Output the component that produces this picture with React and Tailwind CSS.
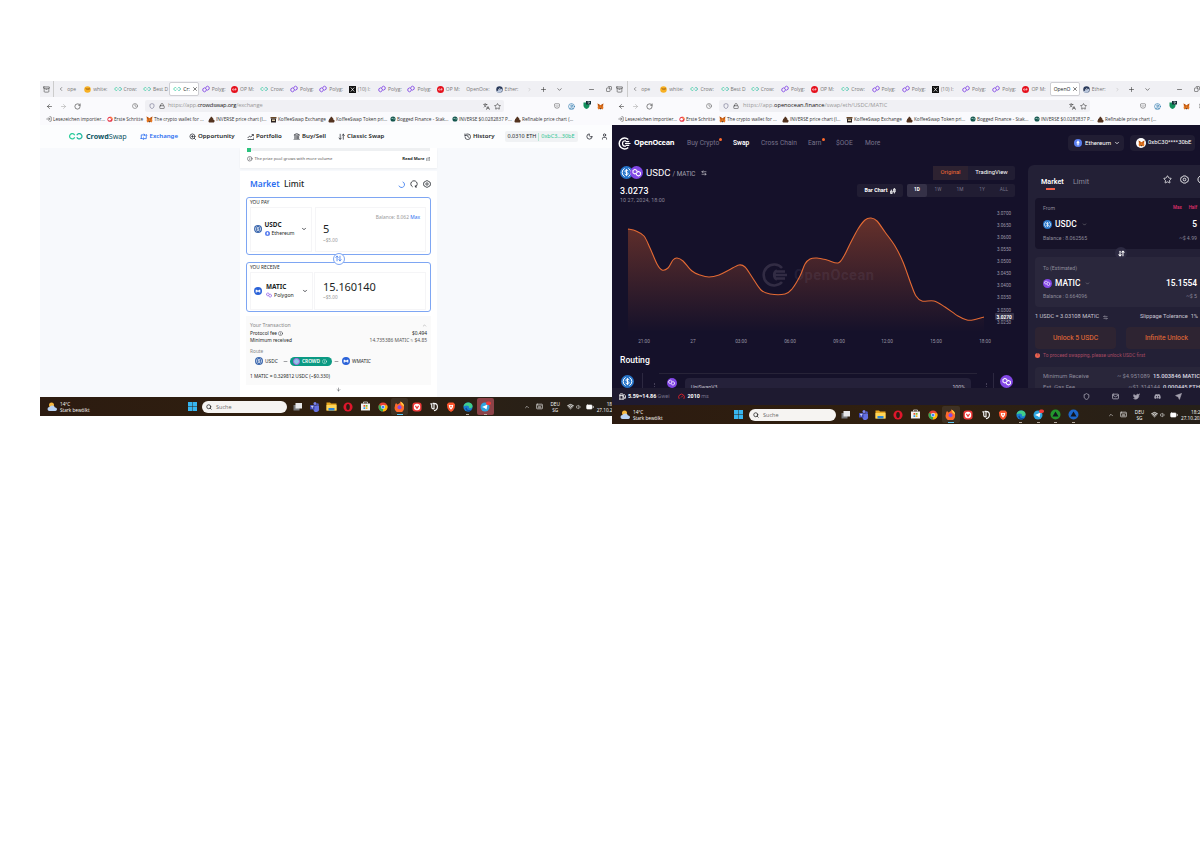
import React from 'react';
import {
  Archive, ArrowDownUp, ArrowLeft, ArrowRight, ArrowUpDown, BatteryMedium, ChevronDown, ChevronLeft, ChevronRight, ChevronUp,
  Clock, Copy, ExternalLink, Fuel, Gauge, History, Info, Keyboard, Landmark, Languages, Lock, LogIn, Mail, Minus, Moon,
  Plus, RotateCw, Search, Shield, Star, User, Volume1, Wifi, X, ArrowLeftRight, ArrowDown,
  ZoomIn, CircleUser, Pocket, Send, Twitter, MoreVertical,
} from 'lucide-react';
import { FaDiscord } from 'react-icons/fa';
import { clsx } from 'clsx';

// ---------- small glyphs ----------

const Polygon = ({ className = 'size-[8px]', color = '#8247e5' }) => (
  <svg viewBox="0 0 24 24" className={className} fill="none" stroke={color} strokeWidth="2.600" strokeLinejoin="round">
    <path d="M12.500 14.500v3L7.500 20.500 2.500 17.500v-6L7.500 8.500l9 7 5-3v-6l-5-3-5 3v3" />
  </svg>
);

const Infinity2 = ({ className = 'w-[8px] h-[4px]' }) => (
  <svg viewBox="0 0 28 12" className={className} fill="none" strokeWidth="2.400">
    <path d="M12.500 4A5 5 0 1 0 12.500 8" stroke="#2fcf9c" />
    <path d="M16.500 4A5 5 0 1 1 16.500 8" stroke="#22b8a0" />
  </svg>
);

const Fox = ({ className = 'size-[7px]' }) => (
  <svg viewBox="0 0 24 24" className={className}>
    <path d="M2 2l8 5h4l8-5-1 9 1 6-3 5-5-2h-4l-5 2-3-5 1-6z" fill="#e8761e" />
    <path d="M2 2l8 5-4 4zM22 2l-8 5 4 4z" fill="#a84c10" />
    <path d="M9 18h6l-1 3h-4z" fill="#3a2a20" />
    <path d="M7 12l3 1v2zM17 12l-3 1v2z" fill="#233447" />
  </svg>
);

const OpBadge = ({ className = 'size-[7px]' }) => (
  <svg viewBox="0 0 14 14" className={className}>
    <circle cx="7" cy="7" r="7" fill="#e5101c" />
    <path d="M3 7a1.500 1.500 0 1 0 3 0 1.500 1.500 0 1 0-3 0M8 9V5.500h2.200v2H8" fill="none" stroke="#fff" strokeWidth="1.100" />
  </svg>
);

const XBadge = () => (
  <svg viewBox="0 0 14 14" className="size-[7px]">
    <path d="M0 0h14v14H0z" fill="#111" />
    <path d="M3.500 3l7 8M10.500 3l-7 8" stroke="#fff" strokeWidth="1.400" />
  </svg>
);

const White = () => (
  <svg viewBox="0 0 14 14" className="size-[7px]">
    <circle cx="7" cy="7" r="6.500" fill="#f7b023" />
    <path d="M2 3.500c3 2 7 2 10 0l-1 4H5z" fill="#8a4c0a" opacity=".6" />
  </svg>
);

const EtherTab = () => (
  <svg viewBox="0 0 14 14" className="size-[7px]">
    <circle cx="7" cy="7" r="6.500" fill="#2b3b5c" />
    <path d="M1 11C4 9 8 6 12 5.500L13 9l-4 4.500H4z" fill="#b9c6dc" />
    <path d="M4 7.500h2M7.500 4v3" stroke="#fff" strokeWidth="1.400" />
  </svg>
);

const Poop = ({ className = 'size-[7px]' }) => (
  <svg viewBox="0 0 14 14" className={className}>
    <path d="M6 1c3 1 3 2 3 3 2 .5 2 2 1.500 3C13 8 13.500 9 13 11c-.5 2-2 2-3 2H3c-2 0-3-3-1-5 0-2 1-3 2-3 0-2 2-2 2-4z" fill="#53331f" />
  </svg>
);

const Coffee = () => (
  <svg viewBox="0 0 14 14" className="size-[7px]">
    <path d="M1 2h12v3H1z" fill="#6b4a2a" />
    <path d="M2 5h10v8H2z" fill="#2c2320" />
    <path d="M4 7h6v3H4z" fill="#d9c8a5" />
  </svg>
);

const Bog = () => (
  <svg viewBox="0 0 14 14" className="size-[6px]">
    <circle cx="7" cy="7" r="6" fill="#14564e" />
    <circle cx="5" cy="5.500" r="1.500" fill="#c7e8de" />
    <circle cx="9.500" cy="6.500" r="1.500" fill="#c7e8de" />
  </svg>
);

const ErsteSchritte = () => (
  <svg viewBox="0 0 14 14" className="size-[6px]">
    <circle cx="7" cy="7.500" r="6" fill="#e8384a" />
    <path d="M8 1c3 0 5 3 5 7L9 7z" fill="#ff8a52" />
    <circle cx="6" cy="7.500" r="3" fill="#fff" />
  </svg>
);

const Usdc = ({ className = 'size-[9px]', bg = '#2775ca' }) => (
  <svg viewBox="0 0 24 24" className={className} fill="none" stroke="#fff" strokeWidth="1.800">
    <circle cx="12" cy="12" r="12" fill={bg} stroke="none" />
    <path d="M8.500 4.500a8.500 8.500 0 0 0 0 15M15.500 4.500a8.500 8.500 0 0 1 0 15" />
    <path d="M14.800 9.500c-.3-1.300-1.300-2-2.800-2-1.700 0-2.800.8-2.800 2.200 0 3 5.700 1.500 5.700 4.500 0 1.400-1.200 2.300-2.900 2.300s-2.800-.8-3-2.200M12 5.800v12.400" />
  </svg>
);

const Eth = ({ className = 'size-[6px]', bg = '#5b7ff0' }) => (
  <svg viewBox="0 0 24 24" className={className}>
    <circle cx="12" cy="12" r="12" fill={bg} />
    <path d="M12 3.500l5 8.500-5 3-5-3zM7.500 14l4.500 6 4.500-6-4.500 2.500z" fill="#fff" />
  </svg>
);

const MaticBlue = ({ className = 'size-[8px]' }) => (
  <svg viewBox="0 0 24 24" className={className}>
    <circle cx="12" cy="12" r="12" fill="#2a62d8" />
    <path d="M5 16.500V8h3.500L12 11l3.500-3H19v8.500h-3.500V13L12 16l-3.500-3v3.500z" fill="#fff" />
  </svg>
);

const PolyCircle = ({ className = 'size-[9px]' }) => (
  <div className={clsx('rounded-full bg-[#8247e5] flex items-center justify-center shrink-0', className)}>
    <Polygon className="size-[72%] -scale-y-100" color="#fff" />
  </div>
);

const OceanMark = ({ className = 'size-[13px]', color = '#fff' }) => (
  <svg viewBox="0 0 26 26" className={className} fill="none" stroke={color} strokeWidth="3">
    <path d="M20.500 5A10.800 10.800 0 1 0 20.500 21" />
    <path d="M16 7.500h-1.500a5.500 5.500 0 0 0 0 11H16" strokeWidth="2.400" />
    <path d="M15 9.300h7.500M14 13h11M15 16.700h7.500" strokeWidth="2.400" />
  </svg>
);

const Gear = ({ className }) => (
  <svg viewBox="0 0 24 24" className={className} fill="none" stroke="currentColor" strokeWidth="2.200" strokeLinejoin="round">
    <path d="M8.500 2.500h7l2 3 3.500.5 1.500 6-1.500 6-3.500.5-2 3h-7l-2-3L3 18l-1.500-6L3 6l3.500-.5z" />
    <circle cx="12" cy="12" r="3.600" />
  </svg>
);

const Refresh = ({ className }) => (
  <svg viewBox="0 0 24 24" className={className} fill="none" stroke="currentColor" strokeWidth="2.400">
    <path d="M8 20.500A9.500 9.500 0 1 1 16 20.500M16 16v5h5" />
  </svg>
);

const SwapNav = ({ className }) => (
  <svg viewBox="0 0 24 24" className={className} fill="none" stroke="currentColor" strokeWidth="2.600">
    <path d="M4 19V6h11M12 2.500L16 6l-4 3.500M20 5v13H9M12 14.500L8 18l4 3.500M1.500 16L4 19l2.500-3M17.500 8L20 5l2.500 3" />
  </svg>
);

const PortfolioNav = ({ className }) => (
  <svg viewBox="0 0 24 24" className={className} fill="none" stroke="currentColor" strokeWidth="2.400">
    <path d="M2 16l6-6 4 3 8-8M15 5h5.500v5M2 21h20v-7" />
  </svg>
);

// ---------- taskbar glyphs ----------

const TaskView = () => (
  <svg viewBox="0 0 22 22" className="size-[11px]"><path d="M3 8h12v11H3z" fill="#77787b" /><path d="M7 4h13v11H7z" fill="#e8e8ea" /></svg>
);
const Teams = () => (
  <svg viewBox="0 0 22 22" className="size-[11px]">
    <circle cx="12" cy="5" r="3" fill="#7b83eb" /><circle cx="17" cy="7" r="2.500" fill="#5059c9" />
    <path d="M7 9h13v6a5 5 0 0 1-11 3z" fill="#6570e0" /><path d="M2 8h9v9H2z" fill="#3d46b0" /><path d="M4 10.500h5M6.500 10.500V15" stroke="#fff" strokeWidth="1.500" />
  </svg>
);
const Folder = () => (
  <svg viewBox="0 0 22 22" className="size-[11px]"><path d="M1 3h7l2 2h11v14H1z" fill="#e9a820" /><path d="M1 8h20v11H1z" fill="#ffd65a" /><path d="M5 14h12v5H5z" fill="#2d86d9" /></svg>
);
const Opera = () => (
  <svg viewBox="0 0 22 22" className="size-[10px]"><circle cx="11" cy="11" r="10" fill="#e0162b" /><ellipse cx="11" cy="11" rx="4" ry="6.500" fill="#2c1d14" /></svg>
);
const Store = () => (
  <svg viewBox="0 0 22 22" className="size-[11px]">
    <path d="M2 5h18v14H2z" fill="#f2f2f2" /><path d="M7 5V2h8v3" fill="none" stroke="#ddd" strokeWidth="1.500" />
    <path d="M7 8h3.500v3.500H7z" fill="#e8552d" /><path d="M11.500 8H15v3.500h-3.500z" fill="#7db928" /><path d="M7 12.500h3.500V16H7z" fill="#2b9de8" /><path d="M11.500 12.500H15V16h-3.500z" fill="#f6b81c" />
  </svg>
);
const Chrome = () => (
  <svg viewBox="0 0 22 22" className="size-[10px]">
    <circle cx="11" cy="11" r="10" fill="#ea4335" /><path d="M11 11L2.400 6A10 10 0 0 0 11 21z" fill="#34a853" /><path d="M11 11v10A10 10 0 0 0 20 7h-9z" fill="#fbbc05" />
    <circle cx="11" cy="11" r="4.600" fill="#fff" /><circle cx="11" cy="11" r="3.500" fill="#4285f4" />
  </svg>
);
const Firefox = () => (
  <svg viewBox="0 0 22 22" className="size-[11px]">
    <path d="M13 1c4 2 8 6 7 11a9.500 9.500 0 1 1-18-2c0-3 1-4 2-6l3 3c2-1 5-2 6-6z" fill="#ff6a2b" />
    <path d="M13 1c5 3 7 6 7 10l-5-4z" fill="#ffd23f" /><circle cx="11" cy="12.500" r="4" fill="#8a4be0" />
  </svg>
);
const Vivaldi = () => (
  <svg viewBox="0 0 22 22" className="size-[10px]"><rect x="1" y="1" width="20" height="20" rx="6" fill="#ef3939" /><circle cx="11" cy="11" r="7" fill="#fff" /><path d="M7.500 8.500L11 14l3.500-5.500" fill="none" stroke="#ef3939" strokeWidth="2.500" /></svg>
);
const Unity = () => (
  <svg viewBox="0 0 22 22" className="size-[10px]" fill="none" stroke="#f4f4f4" strokeWidth="2.600"><path d="M3 4h3v7c0 4 4 5 6 3M8 3h3v11M11 3c10 0 10 15 0 16" /></svg>
);
const Brave = () => (
  <svg viewBox="0 0 22 22" className="size-[10px]"><path d="M6 1h10l4 4-1 8-3 5-5 4-5-4-3-5-1-8z" fill="#fb542b" /><path d="M6 6l5 1 5-1-1 6-4 5-4-5z" fill="#fff" /><path d="M9 9h4l-2 4z" fill="#fb542b" /></svg>
);
const Edge = () => (
  <svg viewBox="0 0 22 22" className="size-[10px]"><circle cx="11" cy="11" r="10" fill="#1b7fd0" /><path d="M1 10C3-2 21-1 21 9c0 4-4 6-8 4 2-5-5-8-12-3z" fill="#41cf8a" /><path d="M8 12c0 5 5 7 11 5-4 6-13 5-14-3z" fill="#0c4f9e" /></svg>
);
const Telegram = () => (
  <svg viewBox="0 0 22 22" className="size-[11px]"><circle cx="10" cy="12" r="9" fill="#2da5e0" /><path d="M4 12l11-5-2 10-4-3z" fill="#fff" /><rect x="12" y="1" width="10" height="7" rx="3.500" fill="#ee3b3b" /></svg>
);
const TriApp = ({ color }) => (
  <svg viewBox="0 0 22 22" className="size-[11px]"><circle cx="11" cy="11" r="10" fill={color} /><path d="M11 5l6 10H5z" fill="#10151f" /></svg>
);
const WinLogo = () => (
  <svg viewBox="0 0 20 20" className="size-[9px] shrink-0"><path d="M0 0h9.500v9.500H0zM10.500 0H20v9.500h-9.500zM0 10.500h9.500V20H0zM10.500 10.500H20V20h-9.500z" fill="#37b6f0" /></svg>
);
const Weather = () => (
  <svg viewBox="0 0 22 20" className="w-[11px] h-[10px]"><circle cx="9" cy="6" r="5" fill="#f6b73c" /><path d="M5 18a4 4 0 0 1 0-8 6 6 0 0 1 11 1 3.500 3.500 0 0 1 1 7z" fill="#b9d2f2" /></svg>
);

// ---------- browser chrome ----------

const TAB_KINDS = {
  white: [<White />, 'white:'],
  crowd: [<Infinity2 />, 'Crow:'],
  best: [<Infinity2 />, 'Best D'],
  poly: [<Polygon />, 'Polyg:'],
  op: [<OpBadge />, 'OP M:'],
  x: [<XBadge />, '(10) I:'],
  ocean: [null, 'OpenOce:'],
  ether: [<EtherTab />, 'Ether:'],
};

const TABS = ['white', 'crowd', 'best', 'crowd', 'poly', 'op', 'crowd', 'poly', 'poly', 'x', 'poly', 'poly', 'op', 'ocean', 'ether'];

const BOOKMARKS = [
  [<LogIn className="size-[6px]" />, 'Lesezeichen importier...', 'w-[61px]', 'w-[61px]'],
  [<ErsteSchritte />, 'Erste Schritte', 'w-[39px]', 'w-[40px]'],
  [<Fox />, 'The crypto wallet for ...', 'w-[62px]', 'w-[63px]'],
  [<Poop />, 'INVERSE price chart (I...', 'w-[62px]', 'w-[64px]'],
  [<Coffee />, 'KoffeeSwap Exchange', 'w-[58px]', 'w-[60px]'],
  [<Poop />, 'KoffeeSwap Token pri...', 'w-[62px]', 'w-[64px]'],
  [<Bog />, 'Bogged Finance - Stak...', 'w-[62px]', 'w-[64px]'],
  [<Bog />, 'INVERSE $0.0282837 P...', 'w-[62px]', 'w-[63px]'],
  [<Poop />, 'Refinable price chart (...', 'w-[62px]', 'w-[64px]'],
];

function BrowserTop({ right, active, host, path }) {
  return (
    <div className="text-[#333] shrink-0 font-['Open_Sans',sans-serif] leading-none whitespace-nowrap">
      <div className="h-4 bg-[#f0f0f4] flex items-center text-[5px]">
        <div className="w-[17px] flex items-center justify-center border-r border-[#ccc] h-full">
          <Archive className="size-[7px] text-[#444]" />
        </div>
        <div className={clsx('flex items-center shrink-0 pl-[4px] gap-[3px]', right ? 'w-[29px]' : 'w-[27px]')}>
          <ChevronLeft className="size-[6px]" />
          <span className="text-[#777]">ope</span>
        </div>
        {TABS.map((kind, i) => {
          const [icon, label] = TAB_KINDS[kind];
          const on = i === active;
          return (
            <div
              key={i}
              className={clsx(
                'flex items-center shrink-0 h-[14px] gap-[2px] pl-[3px]',
                right ? 'w-[30.200px]' : 'w-[29.400px]',
                on && 'bg-white border border-[#cfcfd4] rounded-xs'
              )}
            >
              {icon && <span className="shrink-0">{icon}</span>}
              <span className={on ? 'text-[#222]' : 'text-[#777]'}>
                {on ? (kind === 'ocean' ? 'OpenO' : 'Cr:') : label}
              </span>
              {on && <X className="size-[6px] shrink-0 text-black" />}
            </div>
          );
        })}
        <ChevronRight className="size-[5px] ml-[5px] text-[#aaa] shrink-0" />
        <Plus className="size-[7px] ml-[8px] shrink-0" />
        <ChevronDown className="size-[7px] ml-[9px] shrink-0" />
        <Minus className="size-[7px] shrink-0 ml-[25px]" />
        <Copy className="size-[6px] ml-[11px] shrink-0 -scale-x-100" />
      </div>
      <div className="h-4 bg-[#fafafd] flex items-center pt-[2px]">
        <div className="w-[105px] shrink-0 flex items-center pl-[6px]">
          <ArrowLeft className="size-[7px]" />
          <ArrowRight className="size-[7px] ml-[7px] text-[#aaa]" />
          <RotateCw className="size-[7px] ml-[7px]" />
          <Clock className={clsx('size-[6px] text-[#555]', right ? 'ml-[53px]' : 'ml-[51px]')} />
        </div>
        <div className={clsx('h-[12px] rounded-xs bg-[#f0f0f4] flex items-center text-[5.700px] px-[3px] shrink-0', right ? 'w-[371px] ml-[2px]' : 'w-[359px]')}>
          <Shield className="size-[6px] ml-px text-[#557]" />
          <Lock className="size-[6px] ml-[4px]" />
          <span className={clsx('text-[#999]', right ? 'ml-[4px]' : 'ml-[3px] tracking-[-0.130px]')}>https://app.<span className="text-[#111]">{host}</span>{path}</span>
          <Languages className="size-[7px] ml-auto" />
          <Star className="size-[7px] ml-[4px]" />
        </div>
        <div className={clsx('flex items-center shrink-0 gap-[8px]', right ? 'ml-[50px]' : 'ml-[50px]')}>
          <Pocket className="size-[6px] text-[#444]" />
          <CircleUser className="size-[7px] text-[#1b6ea8]" />
          <svg viewBox="0 0 16 16" className="size-[8px] -mt-[2px]">
            <path d="M1 3h12v6c0 4-3 6-6 7-3-1-6-3-6-7z" fill="#12905c" />
            <path d="M6 0h10v7H6z" fill="#17313a" />
            <path d="M9 2h4L11 5.500" stroke="#fff" strokeWidth="1.200" fill="none" />
          </svg>
          <Fox className="size-[7px] -ml-[2px]" />
          <MoreVertical className="size-[6px] -ml-[1px]" />
        </div>
      </div>
      <div className="h-3 bg-[#fafafd] flex items-center pl-[6px] text-[4.700px] text-[#333]">
        {BOOKMARKS.map(([icon, label, wl, wr], i) => (
          <div key={i} className={clsx('flex items-center gap-[1px] shrink-0', right ? wr : wl)}>
            {icon}<span>{label}</span>
          </div>
        ))}
      </div>
    </div>
  );
}

const APPS = [<TaskView />, <Teams />, <Folder />, <Opera />, <Store />, <Chrome />, <Firefox />, <Vivaldi />, <Unity />, <Brave />, <Edge />, <Telegram />];

function Taskbar({ right }) {
  const apps = right ? [...APPS, <TriApp color="#23962d" />, <TriApp color="#1d66c9" />] : APPS;
  return (
    <div className="h-[19px] shrink-0 bg-linear-to-r from-[#2c1b10] via-[#30200f] to-[#262019] flex items-center text-white text-[4.700px] leading-[6px] font-['Open_Sans',sans-serif] whitespace-nowrap">
      <div className={clsx('shrink-0 flex items-center gap-[2px]', right ? 'w-[122px] pl-[8px]' : 'w-[148px] pl-[7px]')}>
        <Weather />
        <div><div>14°C</div><div>Stark bewölkt</div></div>
      </div>
      <WinLogo />
      <div className={clsx('shrink-0 h-[12px] rounded-full bg-[#f6f4f2] text-[#666] text-[5.500px] flex items-center gap-[4px] pl-[4px]', right ? 'w-[87px] ml-[6px]' : 'w-[85px] ml-[5px]')}>
        <Search className="size-[6px] text-[#222]" strokeWidth={3} />Suche
      </div>
      <div className={clsx('flex shrink-0', right ? 'ml-[1px]' : 'ml-[1.500px]')}>
        {apps.map((icon, i) => (
          <div
            key={i}
            className={clsx(
              'h-[17px] flex items-center justify-center relative rounded-xs',
              right ? 'w-[17.500px]' : 'w-[17.100px]',
              i === 6 && 'bg-white/8',
              i === 11 && !right && 'bg-[#8c4248]'
            )}
          >
            {icon}
            {(i === 6 || i > 9) && <div className={clsx('absolute bottom-0 h-px', i === 6 ? 'w-[6px] bg-[#5cc8f5]' : 'w-[3px] bg-[#b5aaa0]')} />}
          </div>
        ))}
      </div>
      <div className={clsx('flex items-center shrink-0', right ? 'ml-[26px]' : 'ml-[30px]')}>
        <ChevronUp className="size-[6px]" />
        <Keyboard className="size-[7px] ml-[6px]" />
        <div className="text-center ml-[7px] w-[11px]"><div>DEU</div><div>SG</div></div>
        <Wifi className="size-[7px] ml-[6px]" strokeWidth={3} />
        <Volume1 className="size-[6px] ml-[2px]" />
        <BatteryMedium className="size-[8px] ml-[4px]" fill="#fff" />
        <div className="ml-[3px] w-[22px] text-right"><div>18:21</div><div>27.10.2024</div></div>
      </div>
    </div>
  );
}

// ---------- CrowdSwap ----------

const NAV = [
  [SwapNav, 'Exchange', 'w-[48.500px]', true],
  [ZoomIn, 'Opportunity', 'w-[58px]'],
  [PortfolioNav, 'Portfolio', 'w-[46px]'],
  [Landmark, 'Buy/Sell', 'w-[45px]'],
  [ArrowDownUp, 'Classic Swap', 'w-[126px]'],
  [History, 'History', 'w-[41px]'],
];

function CrowdSwap() {
  return (
    <div className="flex-1 min-h-0 overflow-hidden bg-[#f7f9fc] text-[#1c1f26] font-['Noto_Sans',sans-serif] leading-none whitespace-nowrap flex flex-col">
      <div className="h-[23px] shrink-0 bg-[#fcfdfe] flex items-center pl-[28px] text-[6.100px] font-semibold">
        <Infinity2 className="w-[15px] h-[6.500px]" />
        <span className="w-[54px] ml-[3px] text-[7.200px] font-normal text-[#0d5462]"><b>Crowd</b>Swap</span>
        {NAV.map(([Icon, label, w, on]) => (
          <div key={label} className={clsx('flex items-center gap-[2px] shrink-0', w, on && 'text-[#2a6df0]')}>
            <Icon className="size-[7.500px] shrink-0" strokeWidth={2.200} />{label}
          </div>
        ))}
        <div className="h-[11px] w-[73px] bg-[#f0f2f4] flex items-center text-[5.500px] font-normal px-[3px] justify-between shrink-0 rounded-xs">
          <span>0.0310 ETH</span><span className="h-[8px] w-px bg-[#b5e6d3]" /><span className="text-[#2cc591]">0xbC3...30bE</span>
        </div>
        <Moon className="size-[7px] ml-[8px] shrink-0" strokeWidth={2.500} />
        <User className="size-[7px] ml-[8px] shrink-0" strokeWidth={2.500} />
      </div>

      <div className="w-[197px] ml-[200px] h-[20px] shrink-0 bg-white px-[7px] shadow-xs">
        <div className="flex h-[5px] items-start">
          <div className="w-[4px] h-[4px] bg-[#2bc37e]" />
          <div className="h-[3px] flex-1 bg-[#eef0f2]" />
        </div>
        <div className="flex items-center h-[12px] text-[4.200px]">
          <Info className="size-[5.500px]" /><span className="ml-[2px] text-[#555]">The prize pool grows with more volume</span>
          <b className="ml-auto">Read More</b><ExternalLink className="size-[4.500px] ml-px" />
        </div>
      </div>

      <div className="w-[197px] ml-[200px] mt-[3px] flex-1 bg-white px-[6px]">
        <div className="h-[26px] flex items-center pl-[4px] text-[8.400px] font-semibold">
          <span className="text-[#2a6df0] w-[34px]">Market</span>
          <span className="font-medium">Limit</span>
          <svg viewBox="0 0 12 12" className="size-[7px] ml-auto" fill="none" stroke="#4a86f0" strokeWidth="1.600"><path d="M8 1.500A5 5 0 1 1 1.500 8" /></svg>
          <Refresh className="size-[8px] ml-[5px]" />
          <Gear className="size-[8px] ml-[5px]" />
        </div>
        <div className="h-[58px] border border-[#7ea6f3] rounded-[3px] px-[3px]">
          <div className="h-[9px] flex items-center text-[4.800px]">YOU PAY</div>
          <div className="flex h-[45px]">
            <div className="w-[62px] border border-[#f5f5f7] flex items-center pl-[3px] pb-[1px]">
              <Usdc className="size-[8px]" bg="#3c68ae" />
              <div className="ml-[2.500px] w-[36px]">
                <div className="text-[6.400px] font-bold">USDC</div>
                <div className="text-[5px] mt-[2px] flex items-center gap-[2px]"><Eth className="size-[5px]" />Ethereum</div>
              </div>
              <ChevronDown className="size-[6px]" strokeWidth={3} />
            </div>
            <div className="flex-1 border border-[#f5f5f7] ml-[3px] mr-[1px] pl-[7px] pr-[5px]">
              <div className="h-[12px] flex items-end justify-end text-[4.900px] text-[#999]">Balance: 8.062&nbsp;<span className="text-[#2a6df0]">Max</span></div>
              <div className="text-[11px] mt-[3px]">5</div>
              <div className="text-[4.700px] text-[#999] mt-[4px]">~$5.00</div>
            </div>
          </div>
        </div>
        <div className="h-[7px] flex justify-center items-center">
          <div className="size-[12px] shrink-0 rounded-full bg-white border border-[#7ea6f3] flex items-center justify-center relative">
            <ArrowUpDown className="size-[7px] text-[#2a6df0]" strokeWidth={2.500} />
          </div>
        </div>
        <div className="h-[50px] border border-[#7ea6f3] rounded-[3px] px-[3px]">
          <div className="h-[9px] flex items-center text-[4.800px]">YOU RECEIVE</div>
          <div className="flex h-[38px]">
            <div className="w-[63px] border border-[#f5f5f7] flex items-center pl-[3px]">
              <MaticBlue />
              <div className="ml-[4px] w-[36px]">
                <div className="text-[6.400px] font-bold">MATIC</div>
                <div className="text-[5.200px] mt-[2px] flex items-center gap-[2px]"><Polygon className="size-[6px] -scale-y-100" />Polygon</div>
              </div>
              <ChevronDown className="size-[6px]" strokeWidth={3} />
            </div>
            <div className="flex-1 border border-[#f5f5f7] ml-[1px] mr-[1px] pl-[8px] pt-[8px]">
              <div className="text-[11px] tracking-[-0.050px]">15.160140</div>
              <div className="text-[4.700px] text-[#999] mt-[3px]">~$5.00</div>
            </div>
          </div>
        </div>
        <div className="h-[69px] bg-[#fafafa] mt-[4px] px-[4px] pt-[6px] text-[4.800px]">
          <div className="flex justify-between h-[7.500px] items-center text-[#888]"><span className="text-[5.200px]">Your Transaction</span><ChevronUp className="size-[5px]" /></div>
          <div className="flex justify-between h-[7.500px] items-center"><span className="flex gap-px">Protocol fee <Info className="size-[5px]" /></span><span>$0.494</span></div>
          <div className="flex justify-between h-[7.500px] items-center"><span>Minimum received</span><span className="text-[4.900px] text-[#555]">14.735386 MATIC ≈ $4.85</span></div>
          <div className="h-[6px] mt-[4px] text-[#888]">Route</div>
          <div className="flex items-center h-[11px] pl-[5px] mt-px">
            <Usdc className="size-[8px]" bg="#3c68ae" /><span className="ml-[2px] w-[18px]">USDC</span><Minus className="size-[5px]" />
            <div className="ml-[2px] h-[9px] w-[42px] rounded-full bg-[#0b9a83] text-white flex items-center gap-[2px] px-[3px] font-semibold">
              <span className="size-[7px] rounded-full bg-[#8cc9e8] border border-[#b55be0]" />CROWD<Info className="size-[5px]" />
            </div>
            <Minus className="size-[5px] ml-[2px]" /><MaticBlue className="size-[8px] ml-[3px]" /><span className="ml-[2px]">WMATIC</span>
          </div>
          <div className="mt-[7px]">1 MATIC = 0.329812 USDC (~$0.330)</div>
        </div>
        <ArrowDown className="size-[5px] mx-auto mt-[2px]" />
      </div>
    </div>
  );
}

// ---------- OpenOcean ----------

const POINTS = [
  [16, 23], [24, 25], [32, 30], [38, 42], [45, 58], [50, 64], [56, 62], [61, 54], [65, 52], [71, 55], [80, 65], [88, 69], [97, 71],
  [107, 69], [117, 64], [127, 59], [133, 61], [140, 71], [149, 84], [158, 88], [173, 88], [180, 83], [188, 70], [193, 58],
  [198, 53], [205, 52], [215, 54], [226, 57], [232, 50], [238, 38], [246, 23], [253, 14], [259, 12], [265, 15], [273, 26],
  [283, 40], [291, 56], [299, 78], [304, 90], [310, 95], [322, 95], [333, 101], [346, 110], [355, 114], [363, 113.500], [372, 111],
];

// Catmull-Rom to cubic bezier
function smooth(pts) {
  let d = `M${pts[0][0]} ${pts[0][1]}`;
  for (let i = 0; i < pts.length - 1; i++) {
    const a = pts[i - 1] || pts[i];
    const b = pts[i];
    const c = pts[i + 1];
    const e = pts[i + 2] || c;
    d += `C${b[0] + (c[0] - a[0]) / 6} ${b[1] + (c[1] - a[1]) / 6} ${c[0] - (e[0] - b[0]) / 6} ${c[1] - (e[1] - b[1]) / 6} ${c[0]} ${c[1]}`;
  }
  return d;
}

const PRICES = [['3.0700', 9], ['3.0650', 21], ['3.0600', 33], ['3.0550', 45], ['3.0500', 57], ['3.0450', 69], ['3.0400', 81], ['3.0350', 93], ['3.0300', 105.500], ['3.0250', 117.500]];
const TIMES = [['21:00', 32], ['27', 81], ['03:00', 129], ['06:00', 178], ['09:00', 227], ['12:00', 275], ['15:00', 324], ['18:00', 373]];

function PriceChart() {
  const line = smooth(POINTS);
  return (
    <svg viewBox="0 0 416 142" className="w-[416px] h-[142px] shrink-0 block font-['Roboto',sans-serif]">
      <defs>
        <linearGradient id="fill" x1="0" y1="0" x2="0" y2="1">
          <stop offset="0" stopColor="#e8642c" stopOpacity=".38" />
          <stop offset="1" stopColor="#e8642c" stopOpacity="0" />
        </linearGradient>
      </defs>
      <path d={`${line}V126H16Z`} fill="url(#fill)" />
      <g transform="translate(150 57)" fill="none" stroke="#8b7f93" strokeOpacity=".25" strokeWidth="2.600">
        <path d="M20 5A10.500 10.500 0 1 0 20 19M15 7.500a5 5 0 0 0 0 9M14 8.500h9M13 12h12M14 15.500h9" />
      </g>
      <text x="182" y="74" fontSize="14.500" fontWeight="700" textLength="80" fill="#8b7f93" fillOpacity=".15">OpenOcean</text>
      <path d={line} fill="none" stroke="#e36a34" strokeWidth="1.100" />
      {PRICES.map(([t, y]) => <text key={t} x="385" y={y} fontSize="4.600" fill="#9d9aa9">{t}</text>)}
      <rect x="383" y="107" width="19" height="7" rx="1" fill="#37334a" />
      <text x="384.500" y="112.500" fontSize="4.800" fontWeight="700" fill="#fff">3.0270</text>
      {TIMES.map(([t, x]) => <text key={t} x={x} y="136.500" fontSize="4.700" textAnchor="middle" fill="#9a97a6">{t}</text>)}
    </svg>
  );
}

function SwapPanel() {
  return (
    <div className="w-[172px] shrink-0 mt-[4px] bg-[#232036] rounded-tl-md pl-[7px] text-[#8d8a9a] text-[5.200px]">
      <div className="h-[33px] flex items-start pt-[13px] pl-[6px] text-[7.200px]">
        <div className="w-[32px] text-white font-semibold flex flex-col">
          Market
          <div className="w-[9px] h-[2px] bg-[#f0604a] mt-[3px] ml-[5px]" />
        </div>
        <span>Limit</span>
        <Star className="size-[9px] text-white ml-auto -mt-[3px]" />
        <Gear className="size-[9px] text-white ml-[8px] -mt-[3px]" />
        <Refresh className="size-[9px] text-white ml-[8px] -mr-[6px] -mt-[3px]" />
      </div>
      <div className="h-[51px] bg-[#171329] rounded-l pt-[8px] pl-[8px] pr-[3px]">
        <div className="flex justify-between"><span>From</span><span className="text-[#e0306c] font-medium text-[4.500px] flex gap-[7px]"><span>Max</span><span>Half</span></span></div>
        <div className="flex items-center mt-[8px] h-[10px] text-white text-[8.400px]">
          <Usdc className="size-[9px]" /><span className="ml-[3px] font-medium tracking-[0.100px]">USDC</span><ChevronDown className="size-[5px] ml-[5px] text-[#aaa]" />
          <span className="ml-auto font-semibold">5</span>
        </div>
        <div className="flex justify-between mt-[7px]"><span>Balance : 8.062565</span><span>~$ 4.99</span></div>
      </div>
      <div className="h-[8px] flex items-center justify-center pl-[7px]">
        <div className="size-[12px] bg-[#2d2a42] rounded-full flex items-center justify-center shrink-0 relative"><ArrowDownUp className="size-[7px] text-white" strokeWidth={3.500} /></div>
      </div>
      <div className="h-[50px] bg-[#2a273c] rounded-l pt-[9px] pl-[8px] pr-[3px]">
        <div>To (Estimated)</div>
        <div className="flex items-center mt-[7px] h-[10px] text-white text-[8.400px]">
          <PolyCircle /><span className="ml-[3px] font-medium">MATIC</span><ChevronDown className="size-[5px] ml-[5px] text-[#aaa]" />
          <span className="ml-auto font-semibold">15.1554</span>
        </div>
        <div className="flex justify-between mt-[6px]"><span>Balance : 0.664096</span><span>~$ 5</span></div>
      </div>
      <div className="h-[20px] flex items-center text-[#c9c6d2] text-[5.700px] pr-[2px]">
        <span>1 USDC = 3.03108 MATIC</span><ArrowLeftRight className="size-[5px] ml-[4px]" />
        <span className="ml-auto">Slippage Tolerance&nbsp; 1%</span>
      </div>
      <div className="flex h-[22px] gap-[10px] text-[6.800px] text-[#ef7037]">
        <div className="w-[81px] shrink-0 bg-[#2e2432] rounded flex items-center justify-center">Unlock 5 USDC</div>
        <div className="w-[81px] shrink-0 bg-[#2e2432] rounded flex items-center justify-center">Infinite Unlock</div>
      </div>
      <div className="h-[18px] flex items-center pb-[6px] text-[#a64a62] text-[4.900px]">
        <span className="size-[5px] rounded-full bg-[#e8614f] mr-[3px] flex items-center justify-center text-[4px] text-[#232036] font-bold">!</span>To proceed swapping, please unlock USDC first
      </div>
      <div className="bg-[#29263a] rounded-tl h-[30px] pl-[8px] pt-[7px] text-[5.800px] overflow-hidden">
        <div className="flex h-[11px]"><span>Minimum Receive</span><span className="ml-auto">~ $4.951089&nbsp; <b className="text-[#dcdae2] font-medium">15.003846 MATIC</b></span></div>
        <div className="flex h-[11px]"><span>Est. Gas Fee</span><span className="ml-auto">~$1.314144 &nbsp;<b className="text-[#dcdae2] font-medium">0.000445 ETH</b></span></div>
      </div>
    </div>
  );
}

function OpenOcean() {
  return (
    <div className="flex-1 min-h-0 overflow-hidden bg-[#15112a] text-white font-['Roboto',sans-serif] leading-none whitespace-nowrap flex flex-col">
      <div className="h-[36px] shrink-0 flex items-center pl-[6px] text-[#77738a] text-[6.700px]">
        <OceanMark />
        <span className="ml-[3px] w-[53px] text-white text-[7.300px] font-bold font-['Noto_Sans',sans-serif] tracking-[-0.250px]">OpenOcean</span>
        <span className="relative w-[46px]">Buy Crypto<i className="absolute left-[32px] -top-[2px] size-[3px] bg-[#ff6a2c] rounded-xs" /></span>
        <span className="w-[28px] text-white font-semibold">Swap</span>
        <span className="w-[47px]">Cross Chain</span>
        <span className="relative w-[28px]">Earn<i className="absolute left-[14px] -top-[2px] size-[3px] bg-[#ff6a2c] rounded-xs" /></span>
        <span className="w-[29px]">$OOE</span>
        <span className="w-[203px]">More</span>
        <div className="h-4 w-[56px] shrink-0 rounded bg-[#211d33] text-white flex items-center pl-[6px] text-[6.100px]">
          <Eth className="size-[8px] mr-[3px]" />Ethereum<ChevronDown className="size-[6px] ml-[3px]" strokeWidth={3} />
        </div>
        <div className="h-4 w-[65px] shrink-0 ml-[6px] rounded bg-[#211d33] text-white flex items-center pl-[6px] text-[5.900px]">
          <span className="size-[10px] rounded-full bg-white flex items-center justify-center mr-[2px]"><Fox className="size-[7px]" /></span>0xbC30****30bE
        </div>
      </div>

      <div className="flex-1 min-h-0 overflow-hidden flex">
        <div className="w-[416px] shrink-0">
          <div className="h-[45px] flex justify-between pl-[8px] pr-[13px]">
            <div>
              <div className="h-[23px] flex items-center">
                <Usdc className="size-[13px]" /><PolyCircle className="size-[13px] -ml-[3px]" />
                <span className="text-[9.600px] ml-[3px]">USDC</span>
                <span className="text-[6.300px] text-[#a5a2b0] ml-[2px] pt-[3px]">/ MATIC</span>
                <ArrowLeftRight className="size-[6px] ml-[6px]" />
              </div>
              <div className="text-[8.800px] mt-[3px] font-medium tracking-[0.200px]">3.0273</div>
              <div className="text-[5.300px] text-[#8a8698] mt-[2px] tracking-[0.100px]">10 27, 2024, 18:00</div>
            </div>
            <div className="flex flex-col items-end pt-[5px] gap-[4px] text-[5.900px]">
              <div className="flex h-[14px] w-[82px] bg-[#211d33] rounded-xs items-center">
                <span className="w-[35px] h-full bg-[#2d2231] text-[#f06a35] flex items-center justify-center">Original</span>
                <span className="flex-1 text-center">TradingView</span>
              </div>
              <div className="flex gap-[4px]">
                <div className="w-[46px] h-[13px] bg-[#211d33] rounded-xs flex items-center justify-center gap-[2px] text-[5.400px] font-bold">
                  Bar Chart
                  <svg viewBox="0 0 12 12" className="size-[6px]" fill="none" stroke="#fff" strokeWidth="1.500"><path d="M1 6h3.500v5H1zM2.700 3v8M7 2h3.500v6H7zM8.800 0v11" /></svg>
                </div>
                <div className="w-[108px] h-[13px] bg-[#211d33] rounded-xs flex items-center text-center text-[4.800px] text-[#77738a]">
                  <span className="w-[20px] h-full flex items-center justify-center bg-[#353147] text-white font-bold rounded-xs">1D</span>
                  {['1W', '1M', '1Y', 'ALL'].map((p) => <span key={p} className="w-[22px]">{p}</span>)}
                </div>
              </div>
            </div>
          </div>
          <PriceChart />
          <div className="h-[25px] flex items-center pl-[8px] pb-[4px] pt-[3px] text-[8.600px] font-medium">Routing</div>
          <div className="flex items-start pl-[9px]">
            <Usdc className="size-[13px] shrink-0 mt-[2px]" />
            <div className="w-[9px] shrink-0 h-[16px] border-r border-[#2c2840]" />
            <div className="w-[12px] shrink-0 mt-[10px] h-[6px] border-r border-dotted border-[#453f58]" />
            <div className="flex border-t border-[#272338] h-[16px] w-[318px] shrink-0 items-start pt-[3px] ml-[4px] pl-[8px]">
              <PolyCircle className="size-[10px] mt-px" />
              <div className="ml-[8px] mt-px h-[16px] w-[286px] shrink-0 bg-[#25213a] rounded text-[5.200px] text-[#c5c2cf] flex justify-between pt-[7px] px-[6px]"><span>UniSwapV3</span><span>100%</span></div>
            </div>
            <div className="w-[10px] shrink-0 mt-[10px] h-[6px] border-r border-dotted border-[#453f58]" />
            <div className="w-[8px] shrink-0 h-[16px] border-l border-[#2c2840] ml-[6px]" />
            <PolyCircle className="size-[13px] -ml-px mt-[2px]" />
          </div>
        </div>
        <SwapPanel />
      </div>

      <div className="h-[17px] shrink-0 relative bg-[#1e1a30] flex items-center text-[5.400px] pl-[7px] text-[#77738a]">
        <Fuel className="size-[7px] text-white" strokeWidth={3} /><b className="text-white ml-[2px]">5.59~14.86</b>&nbsp;Gwei
        <Gauge className="size-[7px] text-[#e0222c] ml-[8px]" strokeWidth={3} /><b className="text-white ml-[3px]">2010</b>&nbsp;ms
        <div className="ml-auto pr-[18px] flex gap-[14px] text-[#a5a2b0]">
          <Shield className="size-[7px] mr-[8px]" strokeWidth={3} />
          <Mail className="size-[7px]" strokeWidth={3} />
          <Twitter className="size-[7px]" fill="currentColor" />
          <FaDiscord className="size-[7px]" />
          <Send className="size-[7px]" fill="currentColor" />
        </div>
      </div>
    </div>
  );
}

export default function App() {
  return (
    <div className="w-[1200px] h-[848px] bg-white pt-[81px] pl-10 flex items-start overflow-hidden">
      <div className="w-[572px] h-[335px] shrink-0 overflow-hidden flex flex-col">
        <BrowserTop active={3} host="crowdswap.org" path="/exchange" />
        <CrowdSwap />
        <Taskbar />
      </div>
      <div className="w-[588px] h-[343px] shrink-0 overflow-hidden flex flex-col">
        <BrowserTop right active={13} host="openocean.finance" path="/swap/eth/USDC/MATIC" />
        <OpenOcean />
        <Taskbar right />
      </div>
    </div>
  );
}
